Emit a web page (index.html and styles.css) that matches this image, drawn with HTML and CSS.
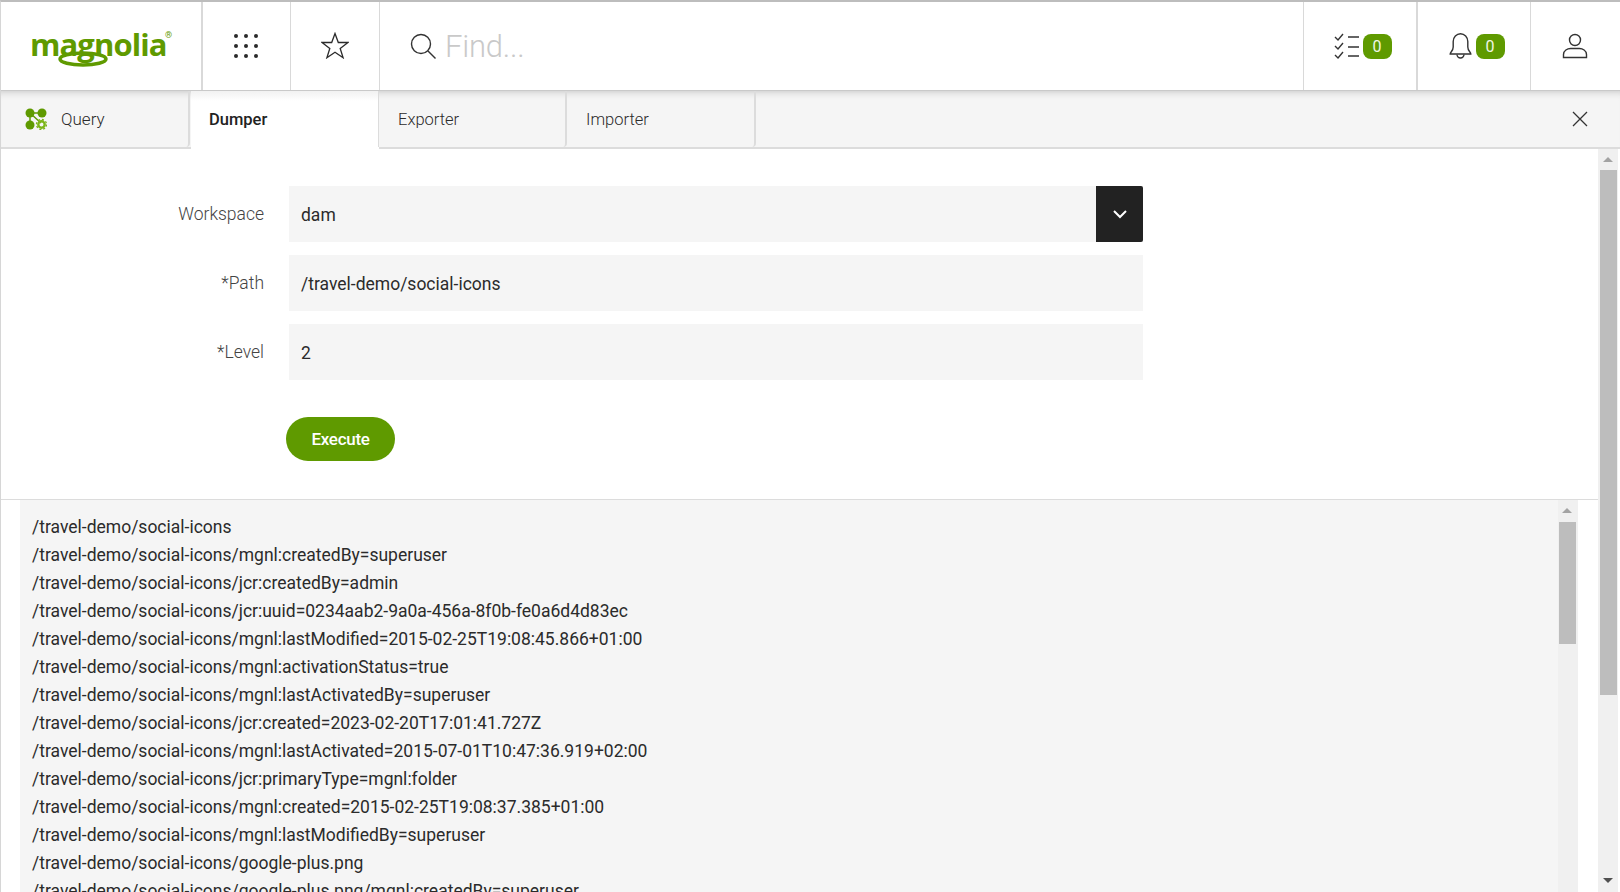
FILE: index.html
```html
<!DOCTYPE html>
<html lang="en">
<head>
<meta charset="utf-8">
<title>Magnolia JCR tools</title>
<link rel="stylesheet" href="styles.css">
</head>
<body>
<div class="app">
  <header class="topbar">
    <div class="cell logo-cell">
      <div class="logo"><span class="logo-text">magnolia</span><span class="logo-reg">®</span>
        <svg class="logo-swoosh" viewBox="0 0 50 16" width="50" height="16"><ellipse cx="25" cy="8" rx="23" ry="6" fill="none" stroke="#5f9a00" stroke-width="3.500"/></svg>
      </div>
    </div>
    <div class="cell apps-cell">
      <svg width="26" height="26" viewBox="0 0 26 26" fill="#2b2b2b"><circle cx="3" cy="3" r="2"/><circle cx="13" cy="3" r="2"/><circle cx="23" cy="3" r="2"/><circle cx="3" cy="13" r="2"/><circle cx="13" cy="13" r="2"/><circle cx="23" cy="13" r="2"/><circle cx="3" cy="23" r="2"/><circle cx="13" cy="23" r="2"/><circle cx="23" cy="23" r="2"/></svg>
    </div>
    <div class="cell star-cell">
      <svg class="star" width="28" height="27" viewBox="0 0 28 27" fill="none" stroke="#2b2b2b" stroke-width="1.3" stroke-linejoin="miter"><path d="M14 1.500l3.300 9h9.700l-7.800 6 2.900 9.200L14 20.200l-8.100 5.500 2.900-9.200-7.800-6h9.700z"/></svg>
    </div>
    <div class="search">
      <svg width="26" height="26" viewBox="0 0 26 26" fill="none" stroke="#333" stroke-width="1.400"><circle cx="11" cy="11" r="9.500"/><path d="M18 18l7.500 7.500"/></svg>
      <span class="find">Find...</span>
    </div>
    <div class="cell tasks-cell">
      <svg width="26" height="26" viewBox="0 0 26 26" fill="none" stroke="#333" stroke-width="1.400"><path d="M1 4l3 3 5-6M1 13l3 3 5-6M1 22l3 3 5-6"/><path d="M14 4h11M14 14h11M14 23h11"/></svg>
      <span class="badge">0</span>
    </div>
    <div class="cell bell-cell">
      <svg width="23" height="26" viewBox="0 0 23 26" fill="none" stroke="#333" stroke-width="1.400"><path d="M1.200 21c0-2 3-3 3-7V8.500a7.300 7.800 0 0 1 14.600 0V14c0 4 3 5 3 7z"/><path d="M8 21.500a3.500 3.500 0 0 0 7 0"/></svg>
      <span class="badge">0</span>
    </div>
    <div class="cell user-cell">
      <svg width="26" height="26" viewBox="0 0 26 26" fill="none" stroke="#333" stroke-width="1.400"><circle cx="13" cy="7" r="5.500"/><path d="M1.500 24.500v-3c0-4 4-6 7-6h9c3 0 7 2 7 6v3z"/></svg>
    </div>
  </header>

  <nav class="tabs">
    <div class="tab tab-first">
      <svg class="tab-icon" width="22" height="22" viewBox="0 0 22 22"><g fill="#5f9a00"><circle cx="5" cy="5" r="4.500"/><circle cx="17" cy="5" r="4.500"/><circle cx="5" cy="17" r="4.500"/><path d="M5 5l12 0M5 5v12M5 5l11 10" stroke="#5f9a00" stroke-width="1.500"/></g><circle cx="16.500" cy="16.500" r="3.200" fill="none" stroke="#7cb518" stroke-width="2.400"/><circle cx="16.500" cy="16.500" r="5" fill="none" stroke="#7cb518" stroke-width="1.400" stroke-dasharray="2 1.900"/></svg>
      <span>Query</span>
    </div>
    <div class="tab tab-active">Dumper</div>
    <div class="tab tab-narrow">Exporter</div>
    <div class="tab">Importer</div>
    <div class="tabs-fill">
      <svg width="16" height="16" viewBox="0 0 16 16" stroke="#333" stroke-width="1.300" fill="none"><path d="M1 1l14 14M15 1L1 15"/></svg>
    </div>
  </nav>

  <main class="content">
    <div class="pane">
      <section class="upper">
        <form class="form">
          <div class="row">
            <label class="label">Workspace</label>
            <div class="field select"><span class="value">dam</span><span class="select-btn"><svg width="14" height="9" viewBox="0 0 14 9" fill="none" stroke="#fff" stroke-width="2"><path d="M1 1l6 6 6-6"/></svg></span></div>
          </div>
          <div class="row">
            <label class="label">*Path</label>
            <div class="field"><span class="value">/travel-demo/social-icons</span></div>
          </div>
          <div class="row">
            <label class="label">*Level</label>
            <div class="field"><span class="value">2</span></div>
          </div>
          <div class="actions"><button type="button" class="execute">Execute</button></div>
        </form>
      </section>
      <section class="output-wrap">
        <div class="output">
          <div class="lines">
            <div>/travel-demo/social-icons</div>
            <div>/travel-demo/social-icons/mgnl:createdBy=superuser</div>
            <div>/travel-demo/social-icons/jcr:createdBy=admin</div>
            <div>/travel-demo/social-icons/jcr:uuid=0234aab2-9a0a-456a-8f0b-fe0a6d4d83ec</div>
            <div>/travel-demo/social-icons/mgnl:lastModified=2015-02-25T19:08:45.866+01:00</div>
            <div>/travel-demo/social-icons/mgnl:activationStatus=true</div>
            <div>/travel-demo/social-icons/mgnl:lastActivatedBy=superuser</div>
            <div>/travel-demo/social-icons/jcr:created=2023-02-20T17:01:41.727Z</div>
            <div>/travel-demo/social-icons/mgnl:lastActivated=2015-07-01T10:47:36.919+02:00</div>
            <div>/travel-demo/social-icons/jcr:primaryType=mgnl:folder</div>
            <div>/travel-demo/social-icons/mgnl:created=2015-02-25T19:08:37.385+01:00</div>
            <div>/travel-demo/social-icons/mgnl:lastModifiedBy=superuser</div>
            <div>/travel-demo/social-icons/google-plus.png</div>
            <div>/travel-demo/social-icons/google-plus.png/mgnl:createdBy=superuser</div>
          </div>
          <div class="scrollbar inner-bar">
            <span class="arrow-up"></span>
            <span class="thumb"></span>
          </div>
        </div>
      </section>
    </div>
    <div class="scrollbar outer-bar">
      <span class="arrow-up"></span>
      <span class="thumb"></span>
      <span class="arrow-down"></span>
    </div>
  </main>
</div>
</body>
</html>
```

FILE: styles.css
```css
* { box-sizing: border-box; }
html, body { margin: 0; height: 100%; overflow: hidden; background: #fff; }
body { font-family: Roboto, "Liberation Sans", sans-serif; color: #2b2b2b; }

.app {
  width: 1620px;
  height: 892px;
  display: flex;
  flex-direction: column;
  overflow: hidden;
  border-left: 1px solid #d6d6d6;
  border-top: 2px solid #bdbdbd;
}

/* top bar */
.topbar {
  flex: 0 0 89px;
  display: flex;
  background: #fff;
  border-bottom: 1px solid #c9c9c9;
  position: relative;
  z-index: 2;
}
.cell {
  display: flex;
  align-items: center;
  justify-content: center;
  border-right: 1px solid #d9d9d9;
}
.logo-cell { flex: 0 0 202px; border-right-width: 2px; }
.apps-cell { flex: 0 0 88px; padding-right: 1px; }
.star-cell { flex: 0 0 89px; padding-bottom: 2px; }
.search {
  flex: 1;
  display: flex;
  align-items: center;
  gap: 9px;
  padding-left: 30px;
  border-right: 1px solid #d9d9d9;
}
.tasks-cell { flex: 0 0 114px; gap: 3px; padding-left: 5px; border-right-width: 2px; }
.bell-cell { flex: 0 0 113px; gap: 4px; padding-left: 5px; }
.user-cell { flex: 0 0 89px; border-right: 0; padding-right: 2px; }

.logo { position: relative; width: 140px; height: 38px; }
.logo-text {
  position: absolute;
  left: -1px;
  top: -2px;
  font-family: "Open Sans", sans-serif;
  font-weight: 700;
  font-size: 31px;
  line-height: 38px;
  letter-spacing: -0.9px;
  color: #5f9a00;
}
.logo-reg {
  position: absolute;
  right: -1px;
  top: 3px;
  font-size: 9px;
  line-height: 10px;
  color: #5f9a00;
}
.logo-swoosh { position: absolute; left: 27px; top: 24px; }

.find { font-size: 31px; font-weight: 300; color: #c9c9c9; letter-spacing: -0.2px; }
.badge {
  width: 29px;
  height: 25px;
  border-radius: 8px;
  background: #5f9a00;
  color: #f1f7e6;
  font-size: 16px;
  line-height: 25px;
  text-align: center;
}

/* tabs */
.tabs {
  flex: 0 0 58px;
  display: flex;
  background: #f5f5f5;
  border-bottom: 2px solid #dcdcdc;
  box-shadow: inset 0 8px 8px -8px #bbb;
}
.tab {
  flex: 0 0 188px;
  margin-right: 1px;
  display: flex;
  align-items: center;
  gap: 14px;
  padding: 0 0 0 18px;
  font-size: 16.5px;
  font-weight: 300;
  border-right: 2px solid #dcdcdc;
  border-radius: 0 0 4px 4px;
}
.tab-first { flex-basis: 189px; padding-left: 24px; font-size: 17px; }
.tab-narrow { flex-basis: 187px; }
.tab-active {
  background: #fff;
  font-weight: 500;
  color: #222;
  height: 56px;
  border-right: 1px solid #dcdcdc;
  border-radius: 0;
  box-shadow: none;
  background-image: linear-gradient(#f1f1f1, #fff 10px);
  position: relative;
}
.tab-active::after {
  content: "";
  position: absolute;
  left: 0;
  right: -1px;
  bottom: -2px;
  height: 2px;
  background: #fff;
}
.tabs-fill {
  flex: 1;
  display: flex;
  align-items: center;
  justify-content: flex-end;
  padding: 0 32px 0 0;
}

/* body */
.content { flex: 1; display: flex; min-height: 0; }
.pane { flex: 1; min-width: 0; display: flex; flex-direction: column; }
.upper { flex: 0 0 351px; border-bottom: 1px solid #dcdcdc; }
.form {
  padding: 37px 0 0;
  display: flex;
  flex-direction: column;
  gap: 13px;
}
.row { display: flex; align-items: stretch; height: 56px; }
.label {
  flex: 0 0 263px;
  text-align: right;
  font-size: 17.5px;
  font-weight: 300;
  color: #444;
  line-height: 56px;
}
.field {
  margin-left: 25px;
  width: 854px;
  background: #f5f5f5;
  display: flex;
  align-items: center;
  padding-left: 12px;
  font-size: 17.5px;
  color: #2b2b2b;
}
.value { padding-top: 2px; }
.select { justify-content: space-between; }
.select-btn {
  width: 47px;
  height: 56px;
  background: #222;
  display: flex;
  align-items: center;
  justify-content: center;
  border-radius: 0 2px 2px 0;
}
.actions { padding: 24px 0 0 285px; }
.execute {
  display: block;
  width: 109px;
  height: 44px;
  border: 0;
  border-radius: 22px;
  background: #5f9a00;
  color: #fff;
  font-family: Roboto, sans-serif;
  font-size: 17px;
  font-weight: 500;
  letter-spacing: -0.3px;
  padding: 0;
}

.output-wrap { flex: 1; min-height: 0; padding: 0 20px 0 19px; }
.output { height: 100%; display: flex; background: #f5f5f5; overflow: hidden; }
.lines {
  flex: 1;
  padding: 13px 0 0 12px;
  font-size: 17.5px;
  line-height: 28px;
  color: #2b2b2b;
  white-space: nowrap;
}

/* scrollbars */
.scrollbar {
  display: flex;
  flex-direction: column;
  align-items: center;
  background: #f0f0f0;
}
.inner-bar { flex: 0 0 20px; padding-right: 2px; }
.outer-bar { flex: 0 0 20px; margin-right: 2px; position: relative; }
.thumb { display: block; width: 17px; background: #bdbdbd; }
.inner-bar .thumb { height: 122px; margin-top: 9px; }
.outer-bar .thumb { height: 525px; margin-top: 8px; }
.arrow-up, .arrow-down { width: 0; height: 0; border-left: 5px solid transparent; border-right: 5px solid transparent; }
.arrow-up { border-bottom: 5px solid #a3a3a3; margin-top: 8px; }
.arrow-down { border-top: 5px solid #505050; margin-top: auto; margin-bottom: 9px; }
```
